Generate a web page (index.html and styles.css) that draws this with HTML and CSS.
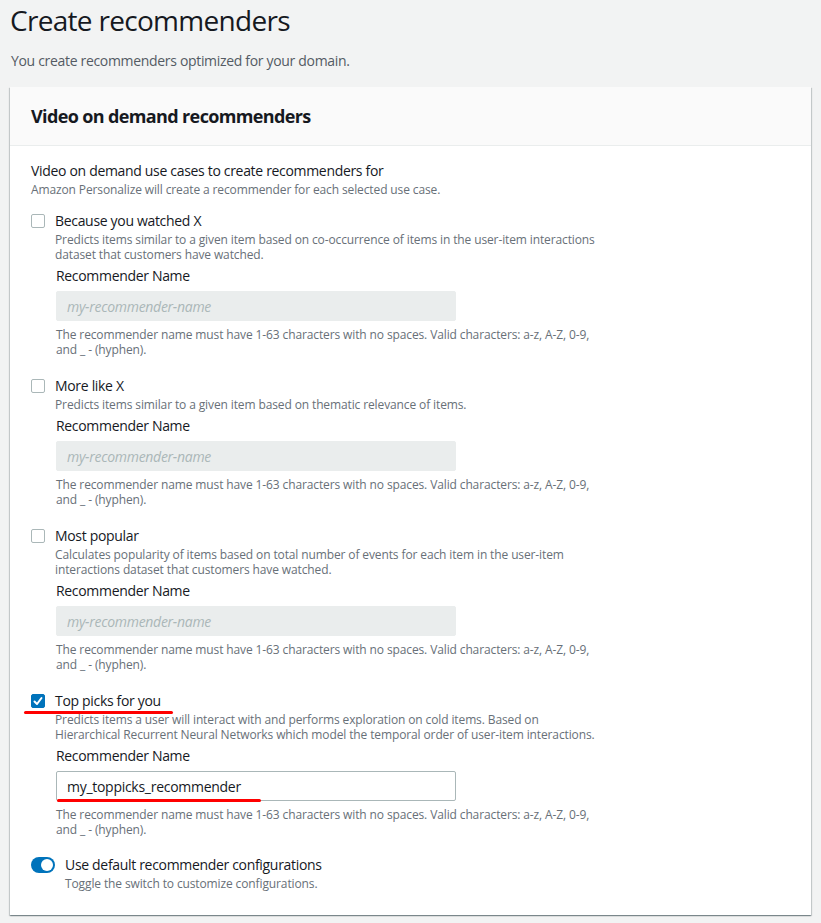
FILE: index.html
```html
<!DOCTYPE html>
<html lang="en">
<head>
    <meta charset="UTF-8">
    <meta name="viewport" content="width=device-width, initial-scale=1.0">
    <title>Create recommenders</title>
    <link rel="stylesheet" href="styles.css">
</head>
<body>
    <div class="page">
        <h1 class="page-title">Create recommenders</h1>
        <p class="page-desc">You create recommenders optimized for your domain.</p>

        <div class="card">
            <div class="card-header">
                <h2>Video on demand recommenders</h2>
            </div>
            <div class="card-body">
                <div class="group-label">Video on demand use cases to create recommenders for</div>
                <div class="group-desc">Amazon Personalize will create a recommender for each selected use case.</div>

                <div class="use-cases">
                    <!-- use case 1 -->
                    <div class="use-case">
                        <div class="check-row">
                            <span class="checkbox"></span>
                            <span class="check-label">Because you watched X</span>
                        </div>
                        <div class="use-body">
                            <div class="desc">Predicts items similar to a given item based on co-occurrence of items in the user-item interactions<br>dataset that customers have watched.</div>
                            <div class="field-label">Recommender Name</div>
                            <div class="field-input">
                                <input type="text" placeholder="my-recommender-name" disabled>
                            </div>
                            <div class="desc constraint">The recommender name must have 1-63 characters with no spaces. Valid characters: a-z, A-Z, 0-9,<br>and _ - (hyphen).</div>
                        </div>
                    </div>

                    <!-- use case 2 -->
                    <div class="use-case">
                        <div class="check-row">
                            <span class="checkbox"></span>
                            <span class="check-label">More like X</span>
                        </div>
                        <div class="use-body">
                            <div class="desc">Predicts items similar to a given item based on thematic relevance of items.</div>
                            <div class="field-label">Recommender Name</div>
                            <div class="field-input">
                                <input type="text" placeholder="my-recommender-name" disabled>
                            </div>
                            <div class="desc constraint">The recommender name must have 1-63 characters with no spaces. Valid characters: a-z, A-Z, 0-9,<br>and _ - (hyphen).</div>
                        </div>
                    </div>

                    <!-- use case 3 -->
                    <div class="use-case">
                        <div class="check-row">
                            <span class="checkbox"></span>
                            <span class="check-label">Most popular</span>
                        </div>
                        <div class="use-body">
                            <div class="desc">Calculates popularity of items based on total number of events for each item in the user-item<br>interactions dataset that customers have watched.</div>
                            <div class="field-label">Recommender Name</div>
                            <div class="field-input">
                                <input type="text" placeholder="my-recommender-name" disabled>
                            </div>
                            <div class="desc constraint">The recommender name must have 1-63 characters with no spaces. Valid characters: a-z, A-Z, 0-9,<br>and _ - (hyphen).</div>
                        </div>
                    </div>

                    <!-- use case 4 (selected) -->
                    <div class="use-case">
                        <div class="check-row">
                            <span class="checkbox checked">
                                <svg viewBox="0 0 14 14" width="14" height="14"><polyline points="3.5,7.5 6,10 10.5,4" fill="none" stroke="#fff" stroke-width="2" stroke-linecap="round" stroke-linejoin="round"/></svg>
                            </span>
                            <span class="check-label">Top picks for you</span>
                        </div>
                        <span class="mark mark-label"></span>
                        <div class="use-body">
                            <div class="desc">Predicts items a user will interact with and performs exploration on cold items. Based on<br>Hierarchical Recurrent Neural Networks which model the temporal order of user-item interactions.</div>
                            <div class="field-label">Recommender Name</div>
                            <div class="field-input">
                                <input type="text" value="my_toppicks_recommender">
                                <span class="mark mark-input"></span>
                            </div>
                            <div class="desc constraint">The recommender name must have 1-63 characters with no spaces. Valid characters: a-z, A-Z, 0-9,<br>and _ - (hyphen).</div>
                        </div>
                    </div>
                </div>

                <!-- toggle -->
                <div class="toggle-row">
                    <span class="toggle"><span class="knob"></span></span>
                    <div>
                        <div class="toggle-label">Use default recommender configurations</div>
                        <div class="desc">Toggle the switch to customize configurations.</div>
                    </div>
                </div>
            </div>
        </div>
    </div>
</body>
</html>
```

FILE: styles.css
```css
/* page */
html, body {
    margin: 0;
    background: #f2f3f3;
    font-family: "Open Sans", "Noto Sans", Arial, sans-serif;
    letter-spacing: -0.02em;
    color: #16191f;
}

.page {
    padding: 0 10px 8px 10px;
}

.page-title {
    margin: 0;
    padding-top: 2px;
    font-size: 28px;
    font-weight: 400;
    line-height: 36px;
    letter-spacing: -0.025em;
}

.page-desc {
    margin: 12px 0 0 1px;
    font-size: 14px;
    line-height: 22px;
    color: #545b64;
}

/* card */
.card {
    margin-top: 15px;
    background: #fff;
    box-shadow: 0 1px 1px 0 rgba(0, 28, 36, 0.3), 1px 1px 1px 0 rgba(0, 28, 36, 0.15), -1px 1px 1px 0 rgba(0, 28, 36, 0.15);
}

.card-header {
    background: #fafafa;
    border-bottom: 1px solid #eaeded;
    padding: 17px 21px;
}

.card-header h2 {
    margin: 0;
    font-size: 18px;
    font-weight: 700;
    line-height: 24px;
    letter-spacing: -0.035em;
}

.card-body {
    padding: 14px 21px 24px 21px;
}

.group-label {
    font-size: 14px;
    line-height: 22px;
}

.group-desc, .desc {
    font-size: 12px;
    line-height: 15px;
    letter-spacing: -0.01em;
    color: #687078;
}

/* use cases */
.use-cases {
    display: flex;
    flex-direction: column;
    gap: 18px;
    margin-top: 13px;
}

.use-case {
    position: relative;
}

.check-row {
    display: flex;
    align-items: center;
    gap: 10px;
    height: 22px;
}

.checkbox {
    box-sizing: border-box;
    width: 14px;
    height: 14px;
    border: 1px solid #aab7b8;
    border-radius: 2px;
    background: #fff;
    display: flex;
}

.checkbox.checked {
    background: #0073bb;
    border-color: #0073bb;
}

.checkbox svg {
    margin: -1px;
}

.check-label {
    font-size: 14px;
    line-height: 22px;
}

.use-body {
    padding-left: 24px;
}

.field-label {
    margin-top: 4px;
    padding-left: 1px;
    font-size: 14px;
    line-height: 20px;
}

.field-input {
    position: relative;
    margin-top: 5px;
    padding-left: 1px;
}

.field-input input {
    box-sizing: border-box;
    width: 400px;
    height: 30px;
    margin: 0;
    padding: 0 10px;
    border: 1px solid #aab7b8;
    border-radius: 2px;
    background: #fff;
    font-family: inherit;
    font-size: 14px;
    letter-spacing: -0.02em;
    color: #16191f;
    outline: none;
}

.field-input input:disabled {
    background: #eaeded;
    border-color: #eaeded;
}

.field-input input::placeholder {
    color: #aab7b8;
    font-style: italic;
}

.constraint {
    margin-top: 6px;
    padding-left: 1px;
}

/* red annotation marks */
.mark {
    position: absolute;
    height: 3px;
    border-radius: 2px;
    background: #f00;
}

.mark-label {
    left: -7px;
    top: 21px;
    width: 149px;
}

.mark-input {
    left: 2px;
    top: 28px;
    width: 204px;
}

/* toggle */
.toggle-row {
    display: flex;
    gap: 10px;
    margin-top: 17px;
}

.toggle {
    box-sizing: border-box;
    width: 24px;
    height: 16px;
    margin-top: 3px;
    border-radius: 8px;
    background: #0073bb;
    padding: 2px;
    display: flex;
    justify-content: flex-end;
}

.knob {
    width: 12px;
    height: 12px;
    border-radius: 50%;
    background: #fff;
}

.toggle-label {
    font-size: 14px;
    line-height: 22px;
}
```
